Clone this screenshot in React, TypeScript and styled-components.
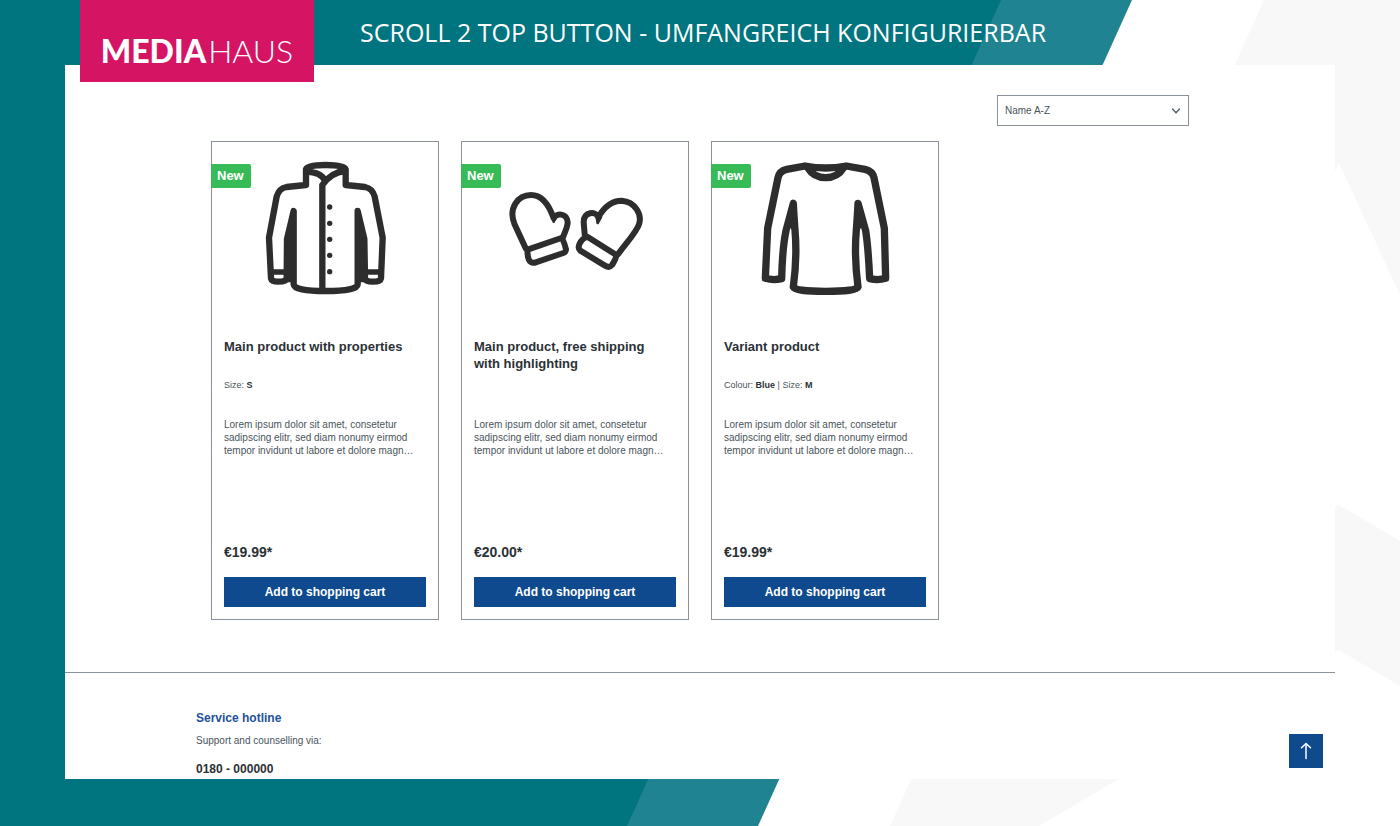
import React from 'react';
import styled, { createGlobalStyle } from 'styled-components';

const color = {
  teal: '#00747f',
  tealLight: '#1f8391',
  haze: '#f8f8f8',
  pink: '#d51464',
  border: '#8a929d',
  ink: '#2b3136',
  text: '#4a545b',
  blue: '#0f4a8f',
  green: '#37bb56',
};

const GlobalStyle = createGlobalStyle`
  *, *::before, *::after { box-sizing: border-box; }
  body {
    margin: 0;
    background: #fff;
    color: ${color.text};
    font-family: "Liberation Sans", Arial, Helvetica, sans-serif;
    font-size: 10px;
  }
  h1, h2, h3, p { margin: 0; }
`;

const Page = styled.div`
  position: relative;
  display: flex;
  flex-direction: column;
  min-height: 100vh;
  padding: 0 65px 47px;
  overflow: hidden;
`;

const Backdrop = styled.svg`
  position: absolute;
  inset: 0;
  width: 100%;
  height: 100%;
  z-index: -1;
`;

const Banner = styled.header`
  display: flex;
  align-items: center;
  gap: 46px;
  height: 65px;
  padding-left: 15px;
`;

const Logo = styled.a`
  position: relative;
  z-index: 1;
  align-self: flex-start;
  display: flex;
  flex: none;
  align-items: flex-end;
  justify-content: center;
  gap: 2px;
  width: 234px;
  height: 82px;
  padding-bottom: 12px;
  background: ${color.pink};
  color: #fff;
  font: 300 32px/38px Lato, sans-serif;
  text-decoration: none;

  strong { font-weight: 900; }
`;

const BannerTitle = styled.h1`
  padding-bottom: 2px;
  color: #fff;
  font: 400 25px/34px "Open Sans", "Noto Sans", sans-serif;
  white-space: nowrap;
`;

const Shop = styled.main`
  position: relative;
  flex: 1;
  background: #fff;
`;

const Container = styled.div<{ $inset?: number }>`
  max-width: 1008px;
  margin: 0 auto;
  padding: 0 ${(p) => p.$inset ?? 0}px;
`;

const Toolbar = styled.div`
  display: flex;
  justify-content: flex-end;
  padding: 30px 0 15px;
`;

const SortField = styled.label`
  position: relative;
  width: 192px;
`;

const SortSelect = styled.select`
  appearance: none;
  display: block;
  width: 100%;
  height: 31px;
  padding: 0 28px 0 7px;
  border: 1px solid ${color.border};
  border-radius: 0;
  background: #fff;
  color: ${color.text};
  font: inherit;
`;

const Chevron = styled.svg`
  position: absolute;
  top: 12px;
  right: 8px;
  width: 10px;
  height: 8px;
  pointer-events: none;
`;

const ProductGrid = styled.div`
  display: grid;
  grid-template-columns: repeat(4, 1fr);
  gap: 22px;
`;

const Card = styled.article`
  position: relative;
  display: flex;
  flex-direction: column;
  min-height: 479px;
  padding: 12px;
  border: 1px solid ${color.border};
`;

const Badge = styled.span`
  position: absolute;
  top: 22px;
  left: -1px;
  padding: 0 7px 0 6px;
  border-radius: 0 2px 2px 0;
  background: ${color.green};
  color: #fff;
  font-size: 13px;
  font-weight: 700;
  line-height: 24px;
`;

const Picture = styled.svg`
  display: block;
  width: 100%;
  height: 150px;
  margin-bottom: 34px;
  fill: none;
  stroke: #2d2d2d;
  stroke-linejoin: round;
  stroke-linecap: round;
`;

const ProductName = styled.h2`
  min-height: 34px;
  padding-right: 12px;
  color: ${color.ink};
  font-size: 13px;
  line-height: 17px;
`;

const Variant = styled.p`
  height: 26px;
  margin: 7px 0 13px;
  font-size: 9px;
  line-height: 13px;

  b { color: ${color.ink}; }
`;

const Description = styled.p`
  line-height: 13px;
`;

const Price = styled.p`
  margin: auto 0 16px;
  color: ${color.ink};
  font-size: 14px;
  font-weight: 700;
  line-height: 18px;
`;

const CartButton = styled.button`
  height: 30px;
  padding: 0;
  border: 0;
  background: ${color.blue};
  color: #fff;
  font: 700 12px/28px "Liberation Sans", Arial, sans-serif;
  cursor: pointer;
`;

const Service = styled.footer`
  margin-top: 52px;
  padding-top: 36px;
  border-top: 1px solid ${color.border};
`;

const ServiceHeading = styled.h3`
  color: #1c529b;
  font-size: 12px;
  line-height: 18px;
`;

const ServiceText = styled.p`
  margin: 6px 0 12px;
  line-height: 16px;
`;

const Hotline = styled.p`
  color: ${color.ink};
  font-size: 12px;
  font-weight: 700;
  line-height: 16px;
`;

const TopButton = styled.button`
  position: absolute;
  right: 12px;
  bottom: 11px;
  display: grid;
  place-items: center;
  width: 34px;
  height: 34px;
  padding: 0;
  border: 0;
  background: ${color.blue};
  cursor: pointer;
`;

const Jacket = () => (
  <Picture viewBox="57 57 606 450" strokeWidth="19" aria-hidden="true">
    <path d="M303 150 L245 156 Q222 160 215 185 L192 308 L198 430 Q200 440 220 440 Q243 440 245 430 L246 312 L266 228 V448 Q268 468 362 468 Q456 468 458 448 V228 L478 312 L480 430 Q482 440 504 440 Q526 440 528 430 L533 308 L509 185 Q502 160 480 156 L422 150 V103 Q418 90 362 90 Q306 90 303 103 Z" />
    <path d="M305 110 Q348 112 360 137 M420 108 Q378 112 352 150 V466" />
    <path d="M246 312 L266 245 V440 H250 Z M478 312 L458 245 V440 H474 Z" strokeWidth="4" fill="#2d2d2d" />
    <path d="M200 411 H244 M482 411 H526" strokeWidth="16" />
    <g fill="#2d2d2d" stroke="none">
      {[216, 265, 313, 361, 410].map((y) => (
        <circle key={y} cx="374" cy={y} r="8" />
      ))}
    </g>
  </Picture>
);

const Mittens = () => (
  <Picture viewBox="57 57 606 450" strokeWidth="18" aria-hidden="true">
    <path d="M212 340 L178 266 C160 220 188 180 228 180 C266 180 284 215 296 250 C304 232 336 234 338 262 C338 276 330 292 323 308" />
    <path d="M293 244 L296 260 L304 244" strokeWidth="8" />
    <path d="M218 344 L319 309 Q325 311 333 343 Q333 351 325 354 L240 383 Q227 385 222 375 Q216 360 218 344 Z" />
    <path d="M389 298 L386 262 C386 230 422 227 430 246 C450 212 476 197 500 197 C540 200 562 238 552 268 C546 290 512 326 489 358" />
    <path d="M424 240 L428 264 L438 246" strokeWidth="8" />
    <path d="M397 305 L484 360 Q484 370 471 390 Q463 400 450 392 L376 347 Q368 340 373 328 Q382 309 397 305 Z" />
  </Picture>
);

const Sweater = () => (
  <Picture viewBox="57 57 606 450" strokeWidth="22" aria-hidden="true">
    <path d="M300 93 L245 103 Q223 108 219 128 L188 280 L181 430 Q205 437 230 431 Q232 340 243 287 L265 205 Q266 230 270 285 Q277 365 265 456 Q270 469 362 469 Q454 469 459 456 Q447 365 454 285 Q458 230 459 205 L482 287 Q490 340 494 431 Q519 437 542 430 L538 280 L507 128 Q502 108 480 103 L424 93 Q362 105 300 93 Z" />
    <path d="M308 98 Q326 128 362 128 Q398 128 416 98" />
    <path d="M245 288 L263 230 L264 285 L254 274 Z M480 288 L461 230 L460 285 L470 274 Z" strokeWidth="4" fill="#2d2d2d" />
  </Picture>
);

interface Product {
  name: string;
  variant?: [string, string][];
  price: string;
  Art: React.ComponentType;
}

const products: Product[] = [
  { name: 'Main product with properties', variant: [['Size', 'S']], price: '€19.99*', Art: Jacket },
  { name: 'Main product, free shipping with highlighting', price: '€20.00*', Art: Mittens },
  { name: 'Variant product', variant: [['Colour', 'Blue'], ['Size', 'M']], price: '€19.99*', Art: Sweater },
];

const ProductCard = ({ name, variant = [], price, Art }: Product) => (
  <Card>
    <Badge>New</Badge>
    <Art />
    <ProductName>{name}</ProductName>
    <Variant>
      {variant.map(([label, value], i) => (
        <React.Fragment key={label}>
          {i > 0 && ' | '}
          {label}: <b>{value}</b>
        </React.Fragment>
      ))}
    </Variant>
    <Description>
      Lorem ipsum dolor sit amet, consetetur sadipscing elitr, sed diam nonumy eirmod tempor
      invidunt ut labore et dolore magn…
    </Description>
    <Price>{price}</Price>
    <CartButton type="button">Add to shopping cart</CartButton>
  </Card>
);

export default function App() {
  return (
    <Page>
      <GlobalStyle />
      <Backdrop viewBox="0 0 1400 826" preserveAspectRatio="none" aria-hidden="true">
        <path fill={color.tealLight} d="M0 0H1132L758 826H0Z" />
        <path fill={color.teal} d="M0 0H1001L627 826H0Z" />
        <path fill={color.haze} d="M1264 0H1400V295L1339 163L1335 172L1119 779L1039 826H890Z" />
        <path fill={color.haze} d="M1335 507L1339 505L1400 541V686L1339 650L1335 652Z" />
      </Backdrop>
      <Banner>
        <Logo href="#" aria-label="MEDIAHAUS">
          <strong>MEDIA</strong>
          <span>HAUS</span>
        </Logo>
        <BannerTitle>SCROLL 2 TOP BUTTON - UMFANGREICH KONFIGURIERBAR</BannerTitle>
      </Banner>
      <Shop>
        <Container $inset={15}>
          <Toolbar>
            <SortField>
              <SortSelect aria-label="Sorting" defaultValue="name-asc">
                <option value="name-asc">Name A-Z</option>
                <option value="name-desc">Name Z-A</option>
              </SortSelect>
              <Chevron viewBox="0 0 10 8" fill="none" stroke="#5c6770" strokeWidth="1.6" aria-hidden="true">
                <path d="M1.5 2L5 5.8L8.5 2" strokeLinecap="round" strokeLinejoin="round" />
              </Chevron>
            </SortField>
          </Toolbar>
          <ProductGrid>
            {products.map((p) => (
              <ProductCard key={p.name} {...p} />
            ))}
          </ProductGrid>
        </Container>
        <Service>
          <Container>
            <ServiceHeading>Service hotline</ServiceHeading>
            <ServiceText>Support and counselling via:</ServiceText>
            <Hotline>0180 - 000000</Hotline>
          </Container>
        </Service>
        <TopButton type="button" aria-label="Scroll to top">
          <svg width="12" height="18" viewBox="0 0 12 18" fill="none" stroke="#fff" strokeWidth="1.5" strokeLinecap="round" strokeLinejoin="round" aria-hidden="true">
            <path d="M6 16.500V1.800M1.500 5.800L6 1.500L10.500 5.800" />
          </svg>
        </TopButton>
      </Shop>
    </Page>
  );
}
